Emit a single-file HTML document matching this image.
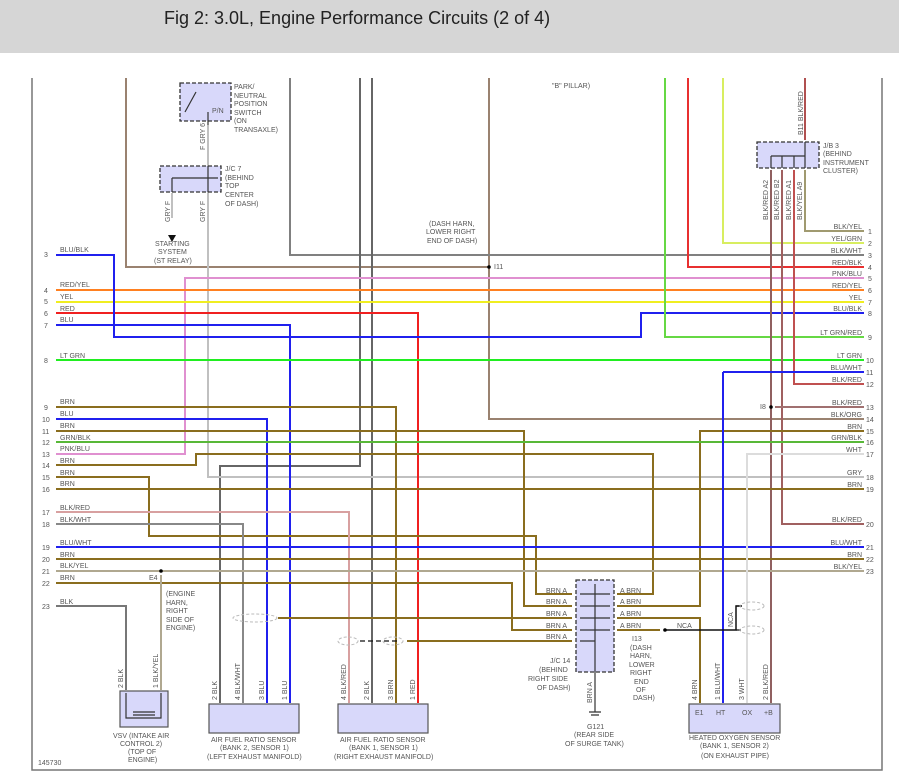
<!DOCTYPE html>
<html><head><meta charset="utf-8"><style>
html,body{margin:0;padding:0;background:#fff;}
#hdr{position:absolute;left:0;top:0;width:899px;height:53px;background:#d6d6d6;}
#hdr span{position:absolute;left:164px;top:8px;font:18px "Liberation Sans",sans-serif;color:#222;}
svg{position:absolute;left:0;top:0;}
text{font-family:"Liberation Sans",sans-serif;font-size:7px;fill:#555;}
</style></head><body>
<div id="hdr"><span>Fig 2: 3.0L, Engine Performance Circuits (2 of 4)</span></div>
<svg width="899" height="780" viewBox="0 0 899 780" fill="none" stroke-linejoin="miter">
<!-- frame -->
<polyline points="32,78 32,770 882,770 882,78" stroke="#777" stroke-width="1.5"/>
<g stroke-width="2">
<!-- top-left brown loop -->
<polyline points="126,78 126,267 489,267" stroke="#9a8270"/>
<polyline points="489,78 489,419 864,419" stroke="#9a8270"/>
<polyline points="290,78 290,255 864,255" stroke="#808080"/>
<polyline points="360,78 360,466 220,466 220,703" stroke="#666"/>
<polyline points="372,78 372,703" stroke="#666"/>
<polyline points="208,125 208,477 864,477" stroke="#c0c0c0"/>
<polyline points="172,193 172,218" stroke="#c0c0c0"/>
<!-- rows -->
<polyline points="56,454 185,454 185,278 864,278" stroke="#e090d0"/>
<polyline points="56,290 864,290" stroke="#ff8020"/>
<polyline points="56,302 864,302" stroke="#f0ee20"/>
<polyline points="56,313 418,313 418,703" stroke="#f02020"/>
<polyline points="56,325 290,325 290,703" stroke="#2020ee"/>
<polyline points="56,255 114,255 114,337 641,337 641,313 864,313" stroke="#2020ee"/>
<polyline points="56,360 864,360" stroke="#20ee20"/>
<polyline points="665,78 665,337 864,337" stroke="#66d844"/>
<polyline points="688,78 688,267 864,267" stroke="#e83030"/>
<polyline points="723,78 723,243 864,243" stroke="#d8ee60"/>
<polyline points="805,78 805,140" stroke="#b05050"/>
<polyline points="771,170 771,703" stroke="#906060"/>
<polyline points="782,170 782,524 864,524" stroke="#a06060"/>
<polyline points="794,170 794,384 864,384" stroke="#c05050"/>
<polyline points="805,170 805,231 864,231" stroke="#a09a70"/>
<polyline points="775,407 864,407" stroke="#a07070"/>
<polyline points="56,407 396,407 396,703" stroke="#8a6d1e"/>
<polyline points="56,419 267,419 267,703" stroke="#2020ee"/>
<polyline points="56,431 524,431 524,606 572,606" stroke="#8a6d1e"/>
<polyline points="864,431 700,431 700,606 617,606" stroke="#8a6d1e"/>
<polyline points="56,442 864,442" stroke="#58b838"/>
<polyline points="56,465 196,465 196,454 653,454 653,594 617,594" stroke="#8a6d1e"/>
<polyline points="56,477 149,477 149,536 536,536 536,594 572,594" stroke="#8a6d1e"/>
<polyline points="56,489 864,489" stroke="#8a6d1e"/>
<polyline points="56,512 349,512 349,703" stroke="#d8a0a0"/>
<polyline points="56,524 243,524 243,703" stroke="#888"/>
<polyline points="56,547 864,547" stroke="#2020ee"/>
<polyline points="56,559 864,559" stroke="#8a6d1e"/>
<polyline points="56,571 864,571" stroke="#b0a890"/>
<polyline points="56,583 512,583 512,630 572,630" stroke="#8a6d1e"/>
<polyline points="278,618 572,618" stroke="#8a6d1e"/>
<polyline points="407,641 572,641" stroke="#8a6d1e"/>
<polyline points="617,618 700,618 700,703" stroke="#8a6d1e"/>
<polyline points="617,630 660,630" stroke="#8a6d1e"/>
<polyline points="56,606 126,606 126,690" stroke="#777"/>
<polyline points="161,575 161,690" stroke="#b0a890"/>
<polyline points="723,372 864,372" stroke="#2020ee"/>
<polyline points="723,372 723,703" stroke="#2020ee"/>
<polyline points="864,454 747,454 747,703" stroke="#dcdcdc"/>
</g>
<polyline points="665,630 736,630 736,606 742,606 M736,630 742,630" stroke="#111" stroke-width="1.5"/>
<path d="M736,630H742M736,606H742M360,641H400" stroke="#111" stroke-width="1.2" stroke-dasharray="5,3"/>
<!-- shields -->
<g stroke="#bbb" stroke-dasharray="3,2" stroke-width="1">
<ellipse cx="255" cy="618" rx="22" ry="4"/>
<ellipse cx="348" cy="641" rx="10" ry="4"/><ellipse cx="393" cy="641" rx="10" ry="4"/>
<ellipse cx="752" cy="606" rx="12" ry="4"/><ellipse cx="752" cy="630" rx="12" ry="4"/>
</g>
<!-- boxes -->
<g fill="#d8d8fa" stroke="#333" stroke-width="1.3" stroke-dasharray="4,2">
<rect x="180" y="83" width="51" height="38"/>
<rect x="160" y="166" width="61" height="26"/>
<rect x="757" y="142" width="62" height="26"/>
<rect x="576" y="580" width="38" height="92"/>
</g>
<g fill="#d8d8fa" stroke="#555" stroke-width="1.2">
<rect x="120" y="691" width="48" height="36"/>
<rect x="209" y="704" width="90" height="29"/>
<rect x="338" y="704" width="90" height="29"/>
<rect x="689" y="704" width="91" height="29"/>
</g>
<g stroke="#333" stroke-width="1.2">
<path d="M185,112L196,92M208,112V125M172,178H218M208,166V192M172,178V192M771,156H805M771,156V168M782,156V168M794,156V168M805,142V168M595,584V672M580,594H610M580,606H610M580,618H610M580,630H610M580,641H595M595,672V712M589,712H601M591,715H599"/>
<path d="M126,693V718H161V693M133,712H155M133,715H155"/>
</g>
<circle cx="489" cy="267" r="1.8" fill="#000"/><circle cx="771" cy="407" r="1.8" fill="#000"/>
<circle cx="665" cy="630" r="1.8" fill="#000"/><circle cx="161" cy="571" r="1.8" fill="#000"/>
<path d="M168,235L176,235L172,242Z" fill="#111"/>
<!-- left labels -->
<g>
<text x="44" y="257">3</text><text x="60" y="252">BLU/BLK</text>
<text x="44" y="293">4</text><text x="60" y="287">RED/YEL</text>
<text x="44" y="304">5</text><text x="60" y="299">YEL</text>
<text x="44" y="316">6</text><text x="60" y="311">RED</text>
<text x="44" y="328">7</text><text x="60" y="322">BLU</text>
<text x="44" y="363">8</text><text x="60" y="358">LT GRN</text>
<text x="44" y="410">9</text><text x="60" y="404">BRN</text>
<text x="42" y="422">10</text><text x="60" y="416">BLU</text>
<text x="42" y="434">11</text><text x="60" y="428">BRN</text>
<text x="42" y="445">12</text><text x="60" y="440">GRN/BLK</text>
<text x="42" y="457">13</text><text x="60" y="451">PNK/BLU</text>
<text x="42" y="468">14</text><text x="60" y="463">BRN</text>
<text x="42" y="480">15</text><text x="60" y="475">BRN</text>
<text x="42" y="492">16</text><text x="60" y="486">BRN</text>
<text x="42" y="515">17</text><text x="60" y="510">BLK/RED</text>
<text x="42" y="527">18</text><text x="60" y="522">BLK/WHT</text>
<text x="42" y="550">19</text><text x="60" y="545">BLU/WHT</text>
<text x="42" y="562">20</text><text x="60" y="557">BRN</text>
<text x="42" y="574">21</text><text x="60" y="568">BLK/YEL</text>
<text x="42" y="586">22</text><text x="60" y="580">BRN</text>
<text x="42" y="609">23</text><text x="60" y="604">BLK</text>
</g>
<!-- right labels -->
<g text-anchor="end">
<text x="862" y="229">BLK/YEL</text><text x="862" y="241">YEL/GRN</text><text x="862" y="253">BLK/WHT</text>
<text x="862" y="265">RED/BLK</text><text x="862" y="276">PNK/BLU</text><text x="862" y="288">RED/YEL</text>
<text x="862" y="300">YEL</text><text x="862" y="311">BLU/BLK</text><text x="862" y="335">LT GRN/RED</text>
<text x="862" y="358">LT GRN</text><text x="862" y="370">BLU/WHT</text><text x="862" y="382">BLK/RED</text>
<text x="862" y="405">BLK/RED</text><text x="862" y="417">BLK/ORG</text><text x="862" y="429">BRN</text>
<text x="862" y="440">GRN/BLK</text><text x="862" y="452">WHT</text><text x="862" y="475">GRY</text>
<text x="862" y="487">BRN</text><text x="862" y="522">BLK/RED</text><text x="862" y="545">BLU/WHT</text>
<text x="862" y="557">BRN</text><text x="862" y="569">BLK/YEL</text>
</g>
<g>
<text x="868" y="234">1</text><text x="868" y="246">2</text><text x="868" y="258">3</text><text x="868" y="270">4</text>
<text x="868" y="281">5</text><text x="868" y="293">6</text><text x="868" y="305">7</text><text x="868" y="316">8</text>
<text x="868" y="340">9</text><text x="866" y="363">10</text><text x="866" y="375">11</text><text x="866" y="387">12</text>
<text x="866" y="410">13</text><text x="866" y="422">14</text><text x="866" y="434">15</text><text x="866" y="445">16</text>
<text x="866" y="457">17</text><text x="866" y="480">18</text><text x="866" y="492">19</text><text x="866" y="527">20</text>
<text x="866" y="550">21</text><text x="866" y="562">22</text><text x="866" y="574">23</text>
</g>
<!-- component labels -->
<g>
<text x="234" y="89">PARK/</text><text x="234" y="98">NEUTRAL</text><text x="234" y="106">POSITION</text><text x="234" y="115">SWITCH</text><text x="234" y="123">(ON</text><text x="234" y="132">TRANSAXLE)</text>
<text x="212" y="113">P/N</text>
<text x="225" y="171">J/C 7</text><text x="225" y="180">(BEHIND</text><text x="225" y="188">TOP</text><text x="225" y="197">CENTER</text><text x="225" y="206">OF DASH)</text>
<text x="155" y="246">STARTING</text><text x="158" y="254">SYSTEM</text><text x="154" y="263">(ST RELAY)</text>
<text x="429" y="226">(DASH HARN,</text><text x="426" y="234">LOWER RIGHT</text><text x="427" y="243">END OF DASH)</text>
<text x="494" y="269">I11</text>
<text x="552" y="88">"B" PILLAR)</text>
<text x="823" y="148">J/B 3</text><text x="823" y="156">(BEHIND</text><text x="823" y="165">INSTRUMENT</text><text x="823" y="173">CLUSTER)</text>
<text x="760" y="409">I8</text>
<text x="149" y="580">E4</text>
<text x="166" y="596">(ENGINE</text><text x="166" y="605">HARN,</text><text x="166" y="613">RIGHT</text><text x="166" y="622">SIDE OF</text><text x="166" y="630">ENGINE)</text>
<text x="546" y="593">BRN  A</text><text x="546" y="604">BRN  A</text><text x="546" y="616">BRN  A</text><text x="546" y="628">BRN  A</text><text x="546" y="639">BRN  A</text>
<text x="620" y="593">A  BRN</text><text x="620" y="604">A  BRN</text><text x="620" y="616">A  BRN</text><text x="620" y="628">A  BRN</text>
<text x="677" y="628">NCA</text>
<text x="550" y="663">J/C 14</text><text x="539" y="672">(BEHIND</text><text x="528" y="681">RIGHT SIDE</text><text x="537" y="690">OF DASH)</text>
<text x="632" y="641">I13</text><text x="630" y="650">(DASH</text><text x="630" y="658">HARN,</text><text x="629" y="667">LOWER</text><text x="630" y="675">RIGHT</text><text x="634" y="684">END</text><text x="636" y="692">OF</text><text x="633" y="700">DASH)</text>
<text x="587" y="729">G121</text><text x="574" y="737">(REAR SIDE</text><text x="565" y="746">OF SURGE TANK)</text>
<text x="113" y="738">VSV (INTAKE AIR</text><text x="120" y="746">CONTROL 2)</text><text x="128" y="754">(TOP OF</text><text x="128" y="762">ENGINE)</text>
<text x="211" y="742">AIR FUEL RATIO SENSOR</text><text x="220" y="750">(BANK 2, SENSOR 1)</text><text x="207" y="759">(LEFT EXHAUST MANIFOLD)</text>
<text x="340" y="742">AIR FUEL RATIO SENSOR</text><text x="349" y="750">(BANK 1, SENSOR 1)</text><text x="334" y="759">(RIGHT EXHAUST MANIFOLD)</text>
<text x="689" y="740">HEATED OXYGEN SENSOR</text><text x="700" y="748">(BANK 1, SENSOR 2)</text><text x="701" y="758">(ON EXHAUST PIPE)</text>
<text x="695" y="715">E1</text><text x="716" y="715">HT</text><text x="742" y="715">OX</text><text x="764" y="715">+B</text>
<text x="38" y="765">145730</text>
</g>
<!-- vertical labels -->
<g>
<text transform="translate(205,150) rotate(-90)">F  GRY  6</text>
<text transform="translate(170,222) rotate(-90)">GRY  F</text>
<text transform="translate(205,222) rotate(-90)">GRY  F</text>
<text transform="translate(803,135) rotate(-90)">B11  BLK/RED</text>
<text transform="translate(768,220) rotate(-90)">BLK/RED  A2</text>
<text transform="translate(779,220) rotate(-90)">BLK/RED  B2</text>
<text transform="translate(791,220) rotate(-90)">BLK/RED  A1</text>
<text transform="translate(802,220) rotate(-90)">BLK/YEL  A9</text>
<text transform="translate(123,688) rotate(-90)">2  BLK</text>
<text transform="translate(158,688) rotate(-90)">1  BLK/YEL</text>
<text transform="translate(217,700) rotate(-90)">2  BLK</text>
<text transform="translate(240,700) rotate(-90)">4  BLK/WHT</text>
<text transform="translate(264,700) rotate(-90)">3  BLU</text>
<text transform="translate(287,700) rotate(-90)">1  BLU</text>
<text transform="translate(346,700) rotate(-90)">4  BLK/RED</text>
<text transform="translate(369,700) rotate(-90)">2  BLK</text>
<text transform="translate(393,700) rotate(-90)">3  BRN</text>
<text transform="translate(415,700) rotate(-90)">1  RED</text>
<text transform="translate(592,703) rotate(-90)">BRN  A</text>
<text transform="translate(733,627) rotate(-90)">NCA</text>
<text transform="translate(697,700) rotate(-90)">4  BRN</text>
<text transform="translate(720,700) rotate(-90)">1  BLU/WHT</text>
<text transform="translate(744,700) rotate(-90)">3  WHT</text>
<text transform="translate(768,700) rotate(-90)">2  BLK/RED</text>
</g>
</svg>
</body></html>
